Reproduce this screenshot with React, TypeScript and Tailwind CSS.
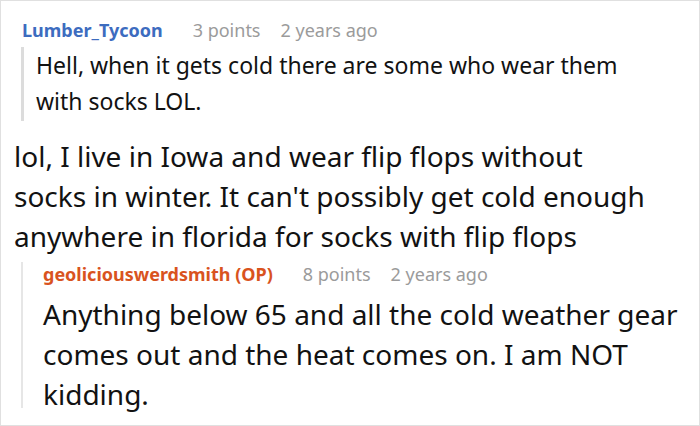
export default function App() {
  return (
    <div className="w-[700px] h-[426px] bg-white border border-[#e0e0e0] overflow-hidden font-['Noto_Sans',sans-serif] text-[#121212]">
      {/* parent comment header */}
      <div className="flex items-baseline pl-[21px] pt-[17px] text-[18px] leading-[24px]">
        <span className="font-bold text-[#3d6cbf]">Lumber_Tycoon</span>
        <span className="ml-[30px] text-[#9b9b9b]">3 points</span>
        <span className="ml-[20px] text-[#9b9b9b]">2 years ago</span>
      </div>
      <div className="ml-[20px] mt-[5px] w-[622px] border-l-[3px] border-[#dcdcdc] pl-[12px] pb-[2px] text-[23px] leading-[36px]">
        Hell, when it gets cold there are some who wear them with socks LOL.
      </div>

      {/* quoted reply */}
      <div className="mt-[15px] w-[656px] pl-[13px] text-[28px] leading-[40px]">
        lol, I live in Iowa and wear flip flops without socks in winter. It can't possibly get cold enough anywhere in florida for socks with flip flops
      </div>

      {/* OP reply */}
      <div className="ml-[20px] mt-[6px] h-[146px] w-[680px] border-l-[2px] border-[#e6e6e6] pl-[20px]">
        <div className="flex items-baseline text-[18px] leading-[24px]">
          <span className="font-bold text-[#d9531e]">geoliciouswerdsmith (OP)</span>
          <span className="ml-[30px] text-[#9b9b9b]">8 points</span>
          <span className="ml-[20px] text-[#9b9b9b]">2 years ago</span>
        </div>
        <div className="mt-[8px] text-[28px] leading-[40px]">
          Anything below 65 and all the cold weather gear comes out and the heat comes on. I am NOT kidding.
        </div>
      </div>
    </div>
  );
}
